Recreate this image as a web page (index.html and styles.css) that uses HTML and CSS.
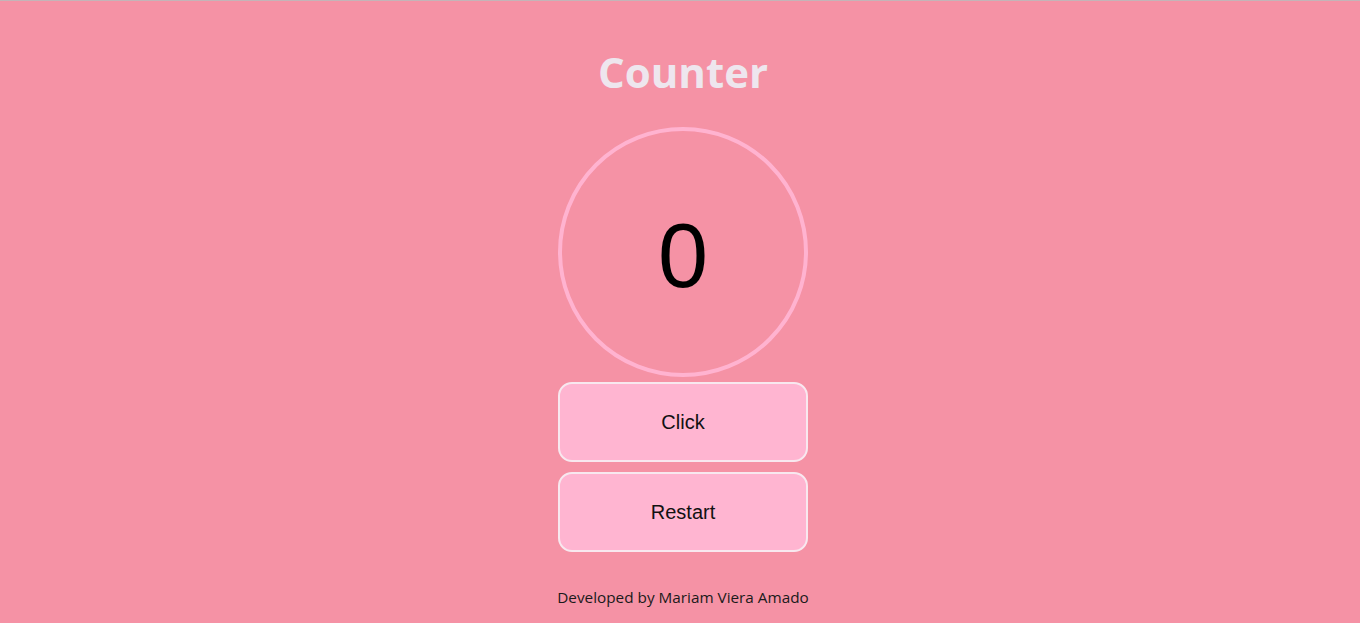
FILE: index.html
```html
<!DOCTYPE html>
<html lang="en">
<head>
<meta charset="utf-8">
<title>Counter</title>
<link rel="stylesheet" href="styles.css">
</head>
<body>
<main class="app">
  <h1 class="title">Counter</h1>
  <div class="display">0</div>
  <div class="actions">
    <button class="btn">Click</button>
    <button class="btn">Restart</button>
  </div>
  <footer class="credit">Developed by Mariam Viera Amado</footer>
</main>
</body>
</html>
```
FILE: styles.css
```css
html, body {
  margin: 0;
  padding: 0;
  height: 100%;
}
body {
  background: #f592a5;
  border-top: 1px solid #c4b4b8;
  box-sizing: border-box;
  font-family: "Open Sans", "Liberation Sans", sans-serif;
}
.app {
  display: flex;
  flex-direction: column;
  align-items: center;
  padding-top: 44px;
  padding-left: 6px;
}
.title {
  margin: 0;
  font-size: 42px;
  line-height: 53px;
  font-weight: 700;
  color: #eee6ee;
}
.display {
  margin-top: 29px;
  width: 250px;
  height: 250px;
  box-sizing: border-box;
  border: 4px solid #ffb3d0;
  border-radius: 50%;
  display: flex;
  align-items: center;
  justify-content: center;
  padding-top: 8px;
  font-family: "Liberation Sans", Arial, sans-serif;
  font-size: 90px;
  color: #000;
}
.actions {
  margin-top: 5px;
  display: flex;
  flex-direction: column;
  gap: 10px;
}
.btn {
  width: 250px;
  height: 80px;
  box-sizing: border-box;
  background: #ffb5d1;
  border: 2px solid #f8e8ef;
  border-radius: 14px;
  font-family: "Liberation Sans", Arial, sans-serif;
  font-size: 20px;
  color: #111;
  cursor: pointer;
}
.credit {
  margin-top: 35px;
  font-size: 15.3px;
  line-height: 20px;
  color: #1a1a1a;
}
```
